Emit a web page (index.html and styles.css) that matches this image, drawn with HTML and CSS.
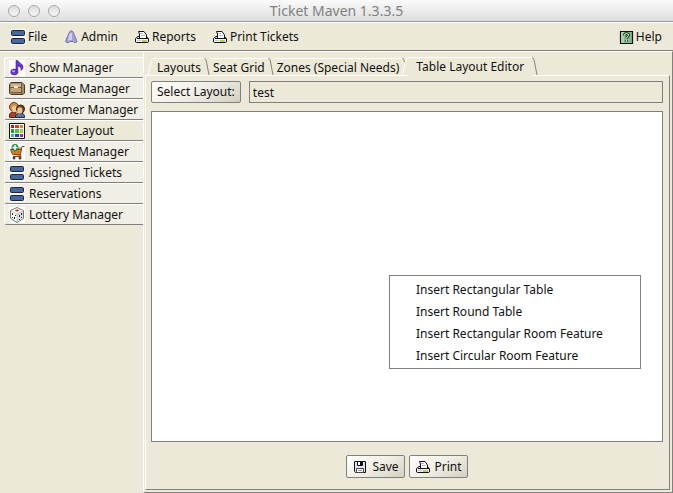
FILE: index.html
```html
<!DOCTYPE html>
<html lang="en">
<head>
<meta charset="utf-8">
<title>Ticket Maven 1.3.3.5</title>
<link rel="stylesheet" href="styles.css">
</head>
<body>
<svg class="sprites" aria-hidden="true">
  <symbol id="drawers" viewBox="0 0 16 16">
    <path fill="#f8f7f0" d="M1 0h15v16H1z"/>
    <rect x="1.500" y="1.500" width="13" height="5" rx="1" fill="#4c639f" stroke="#18224a"/>
    <rect x="1.500" y="9.500" width="13" height="5" rx="1" fill="#4c639f" stroke="#18224a"/>
    <path fill="#2f7f8a" d="M4 3h3v1H4zM9 4h3v1H9zM4 11h3v1H4zM9 12h3v1H9z"/>
  </symbol>
  <symbol id="cone" viewBox="0 0 16 16">
    <path fill="#a5a1d6" stroke="#77739f" d="M8.500 1.500C6.500 2 5.500 5 4.500 7.500L2.500 12.500Q4 14 6 13.500L7 12.500H10L11 13.500Q13 14 14 12.500L12 7.500C11 5 10 2 8.500 1.500Z"/>
    <path fill="#cfccee" d="M7 4h2v7H5l1-4z"/>
  </symbol>
  <symbol id="printer" viewBox="0 0 16 16">
    <path fill="#f2f2f6" stroke="#111" d="M1.500 9.500L4 7.500H12L14.500 9.500V13L13.500 13.500H2.500L1.500 13Z"/>
    <path fill="#fff" stroke="#111" d="M5.500 9V5L4.500 2.500H10L12.500 6V9"/>
    <path fill="#aab8e6" d="M6 4h3v1H6zM7 6h4v1H7z"/>
    <path fill="#111" d="M3 9h11v1H3z"/>
    <path fill="#b5d33a" d="M8 11h5v2H8z"/>
    <path fill="#c9c9d2" d="M3 11h4v1H3z"/>
  </symbol>
  <symbol id="help" viewBox="0 0 16 16">
    <path fill="#86b98a" stroke="#111" stroke-width="1.200" d="M2.500 2.500h12v12h-12z"/>
    <path fill="#a9d0a9" d="M3 3h3v11H3z"/>
    <path fill="none" stroke="#1e4b2a" stroke-width="3" d="M6.500 6.500V5.500q2-2 4 0v1L8.500 9M8.500 11V12.500"/>
    <path fill="none" stroke="#e7f7e5" d="M6.500 6.500V5.500q2-2 4 0v1L8.500 9M8.500 11V12.500"/>
  </symbol>
  <symbol id="note" viewBox="0 0 16 16">
    <path fill="#fff" d="M0 0h16v16H0z"/>
    <path fill="#6a35d8" stroke="#3c1a96" stroke-width=".6" d="M7 .5H8.800C9.300 3 14 3.500 14 7Q14 9 12 10.500Q12.800 7 8.800 6V12.500H7Z"/>
    <ellipse cx="5.300" cy="12" rx="3.600" ry="3" fill="#6a35d8" stroke="#3c1a96" stroke-width=".6"/>
    <ellipse cx="4.500" cy="11.200" rx="1.500" ry="1" fill="#c0a8fa"/>
  </symbol>
  <symbol id="crate" viewBox="0 0 16 16">
    <path fill="#a98a62" stroke="#4a3828" d="M.5 3.500L2 1.500H13L15.500 4V12L14 13.500H2L.5 12Z"/>
    <path fill="#cdb68f" d="M2 3h10v3H2z"/>
    <path fill="#c0a57c" d="M2 7h10v4H2z"/>
    <path fill="#75573a" d="M1 6h12v1H1zM12 3h1v10h-1zM2 11h11v1H2z"/>
    <path fill="#f3ead4" d="M5 5h4v2H5z"/>
  </symbol>
  <symbol id="people" viewBox="0 0 16 16">
    <path fill="#b0402a" stroke="#5e2114" d="M.5 15.500V12L3 10H7V15.500Z"/>
    <circle cx="5" cy="5" r="4.500" fill="#d08f42" stroke="#6b3c14"/>
    <ellipse cx="5.500" cy="7" rx="2.500" ry="3.200" fill="#f2c897"/>
    <path fill="#56769f" stroke="#1f2f4d" d="M6.500 15.500V13.500L9 11.500H14L15.500 13.500V15.500Z"/>
    <circle cx="11.500" cy="7" r="4" fill="#6e4528" stroke="#3e2414"/>
    <ellipse cx="10.800" cy="8.500" rx="2.600" ry="3.200" fill="#efbf90"/>
  </symbol>
  <symbol id="palette" viewBox="0 0 16 16">
    <path fill="#fff" stroke="#111" d="M.5.5h15v15H.5z"/>
    <path fill="#c01818" d="M2 2h3v3H2z"/><path fill="#e03c20" d="M6 2h4v3H6z"/><path fill="#c89020" d="M11 2h3v3h-3z"/>
    <path fill="#2a9a30" d="M2 6h3v4H2z"/><path fill="#48c840" d="M6 6h4v4H6z"/><path fill="#a8c830" d="M11 6h3v4h-3z"/>
    <path fill="#2fb4c8" d="M2 11h3v3H2z"/><path fill="#2440c0" d="M6 11h4v3H6z"/><path fill="#9a28b8" d="M11 11h3v3h-3z"/>
  </symbol>
  <symbol id="cart" viewBox="0 0 16 16">
    <path fill="#fff" d="M0 0h16v16H0z"/>
    <path fill="#ee8d3c" stroke="#8a3d10" d="M1.500 5.500H12L13 2.500H15.500M12.500 5L11.500 10.500H3.500L1.500 5.500M11.500 10.500L12 12.500H4"/>
    <path stroke="#b85c1c" stroke-width=".7" d="M3 8h9M6 6v4M9 6v4"/>
    <circle cx="5" cy="14" r="1.500" fill="#444"/><circle cx="11" cy="14" r="1.500" fill="#444"/>
    <circle cx="6" cy="3.500" r="3.500" fill="#278c3c"/><path stroke="#fff" stroke-width="1.500" d="M6 1v5M3.500 3.500h5"/>
  </symbol>
  <symbol id="dice" viewBox="0 0 16 16">
    <path fill="#fff" d="M0 0h16v16H0z"/>
    <path fill="#fafafa" stroke="#777" d="M8 .5L14.500 3.500V11.500L8 15.500L1.500 11.500V3.500Z"/>
    <path fill="#dcdcdc" d="M8 7L14 4V11L8 15Z"/><path fill="none" stroke="#aaa" stroke-width=".6" d="M2 4L8 7L14 4M8 7V15"/>
    <ellipse cx="8" cy="3.500" rx="1.800" ry="1.100" fill="#d02a20"/>
    <path fill="#222" d="M3 6h1v2H3zM5 10h1v2H5zM3 10h1v1H3zM6 8h1v1H6zM10 8h1v2h-1zM12 6h1v2h-1zM12 10h1v1h-1zM10 12h1v1h-1z"/>
  </symbol>
  <symbol id="floppy" viewBox="0 0 16 16">
    <path fill="#dfe3ee" stroke="#111" d="M2.500 2.500H13.500V13.500H3.500L2.500 12.500Z"/>
    <path fill="#fff" stroke="#111" d="M5.500 2.500h5v4h-5z"/><path fill="#111" d="M8 3h2v3H8z"/>
    <path fill="#fff" stroke="#444" d="M4.500 9.500h7v4h-7z"/><path fill="#999" d="M6 11h4v1H6z"/>
  </symbol>
</svg>

<header class="titlebar">
  <div class="lights"><i></i><i></i><i></i></div>
  <h1>Ticket Maven 1.3.3.5</h1>
</header>

<nav class="menubar">
  <button><svg><use href="#drawers"/></svg>File</button>
  <button><svg><use href="#cone"/></svg>Admin</button>
  <button><svg><use href="#printer"/></svg>Reports</button>
  <button><svg><use href="#printer"/></svg>Print Tickets</button>
  <button class="help"><svg><use href="#help"/></svg>Help</button>
</nav>

<div class="workspace">
  <nav class="sidebar">
    <button><svg><use href="#note"/></svg>Show Manager</button>
    <button><svg><use href="#crate"/></svg>Package Manager</button>
    <button><svg><use href="#people"/></svg>Customer Manager</button>
    <button class="active"><svg><use href="#palette"/></svg>Theater Layout</button>
    <button><svg><use href="#cart"/></svg>Request Manager</button>
    <button><svg><use href="#drawers"/></svg>Assigned Tickets</button>
    <button><svg><use href="#drawers"/></svg>Reservations</button>
    <button><svg><use href="#dice"/></svg>Lottery Manager</button>
  </nav>

  <main class="content">
    <div class="tabs" role="tablist">
      <svg class="lead" viewBox="0 0 6 18"><path d="M.5 18L3 5Q4 1.500 6 1.500"/></svg>
      <button class="tab" role="tab">Layouts</button>
      <svg class="edge" viewBox="0 0 6 18"><path d="M.5 1Q2 2 2.500 5L5 18"/></svg>
      <button class="tab" role="tab">Seat Grid</button>
      <svg class="edge" viewBox="0 0 6 18"><path d="M.5 1Q2 2 2.500 5L5 18"/></svg>
      <button class="tab" role="tab">Zones (Special Needs)</button>
      <svg class="edge" viewBox="0 0 6 18"><path class="lit" d="M.5 18L3 5Q4 .5 6 .5"/><path d="M.5 1Q2 2 2.500 5"/></svg>
      <button class="tab selected" role="tab" aria-selected="true">Table Layout Editor</button>
      <svg class="edge last" viewBox="0 0 6 18"><path d="M.5 .5Q2 2 2.500 5L5 18"/></svg>
    </div>
    <section class="panel">
      <div class="picker">
        <button class="push">Select Layout:</button>
        <input type="text" value="test" aria-label="Selected layout" readonly>
      </div>
      <div class="canvas">
        <div class="popup" role="menu">
          <button role="menuitem">Insert Rectangular Table</button>
          <button role="menuitem">Insert Round Table</button>
          <button role="menuitem">Insert Rectangular Room Feature</button>
          <button role="menuitem">Insert Circular Room Feature</button>
        </div>
      </div>
      <div class="actions">
        <button class="push"><svg><use href="#floppy"/></svg>Save</button>
        <button class="push"><svg><use href="#printer"/></svg>Print</button>
      </div>
    </section>
  </main>
</div>
</body>
</html>
```
FILE: styles.css
```css
* { box-sizing: border-box; }

:root {
  --face: #ece9d8;
  --line: #808080;
}

body {
  margin: 0;
  min-height: 100vh;
  display: flex;
  flex-direction: column;
  background: var(--face);
  color: #111;
  font: 12px/16px "Noto Sans", "Open Sans", sans-serif;
}

button, input {
  margin: 0;
  padding: 0;
  border: 0;
  background: none;
  color: inherit;
  font: inherit;
  white-space: nowrap;
}

svg { width: 16px; height: 16px; flex: none; }
.sprites { position: absolute; width: 0; height: 0; }

.titlebar {
  display: grid;
  grid-template-columns: 60px 1fr 60px;
  align-items: center;
  height: 22px;
  border-bottom: 1px solid #999;
  background: linear-gradient(#fafafa, #dedede);
}
.titlebar h1 {
  margin: 0;
  color: #808080;
  font-size: 14px;
  font-weight: 400;
  text-align: center;
}
.lights { display: flex; gap: 8px; padding-left: 8px; }
.lights i {
  width: 12px;
  height: 12px;
  border: 1px solid #a8a8a8;
  border-radius: 50%;
  background: linear-gradient(#dcdcdc, #f8f8f8);
}

.menubar {
  display: flex;
  gap: 16px;
  height: 29px;
  padding: 0 11px 0 10px;
  border-top: 1px solid #fff;
  border-bottom: 1px solid var(--line);
}
.menubar button { display: flex; align-items: center; gap: 2px; }
.menubar .help { margin-left: auto; }

.workspace { display: flex; flex: 1; }

.sidebar {
  display: flex;
  flex-direction: column;
  width: 143px;
  padding: 5px 0 0 4px;
  border-top: 1px solid #fff;
}
.sidebar button {
  display: flex;
  align-items: center;
  gap: 4px;
  height: 21px;
  padding-left: 4px;
  border-top: 1px solid #fff;
  border-left: 1px solid #fff;
  border-bottom: 1px solid var(--line);
  border-radius: 3px 0 0 3px;
  background: #f1efe5;
}
.sidebar .active { background: var(--face); }

.content {
  flex: 1;
  display: flex;
  flex-direction: column;
  padding: 5px 2px 2px 1px;
  border: 1px solid;
  border-color: #fff var(--line) var(--line) #fff;
}

.tabs {
  position: relative;
  z-index: 1;
  display: flex;
  height: 19px;
  padding-left: 3px;
}
.tabs svg {
  width: 6px;
  height: 18px;
  fill: none;
  stroke: var(--line);
}
.tabs .lead, .tabs .lit { stroke: #fff; }
.tab {
  height: 18px;
  margin-top: 1px;
  padding: 0 3px;
  border-top: 1px solid #fff;
}
.tab.selected {
  height: 19px;
  margin-top: 0;
  padding: 0 8px 1px;
  background: var(--face);
}

.panel {
  flex: 1;
  display: flex;
  flex-direction: column;
  margin-top: -1px;
  padding: 5px 6px 11px 5px;
  border: 1px solid;
  border-color: #fff var(--line) var(--line) #fff;
}

.picker { display: flex; gap: 8px; margin-bottom: 8px; }
.picker input {
  flex: 1;
  min-width: 0;
  height: 22px;
  padding: 0 3px;
  border: 1px solid var(--line);
}

.push {
  display: flex;
  align-items: center;
  justify-content: center;
  gap: 4px;
  height: 22px;
  padding: 0 5px;
  border: 1px solid var(--line);
  border-radius: 2px;
  background: linear-gradient(150deg, #fff, #f0eee4 50%, #d3d0c2);
}

.canvas {
  position: relative;
  flex: 1;
  border: 1px solid var(--line);
  background: #fff;
}

.popup {
  position: absolute;
  left: 237px;
  top: 163px;
  display: flex;
  flex-direction: column;
  width: 252px;
  padding: 3px 2px 1px;
  border: 1px solid var(--line);
  background: #fff;
}
.popup button { height: 22px; padding-left: 24px; text-align: left; }

.actions {
  display: flex;
  justify-content: center;
  gap: 4px;
  margin-top: 13px;
}
.actions .push { height: 23px; }
```
